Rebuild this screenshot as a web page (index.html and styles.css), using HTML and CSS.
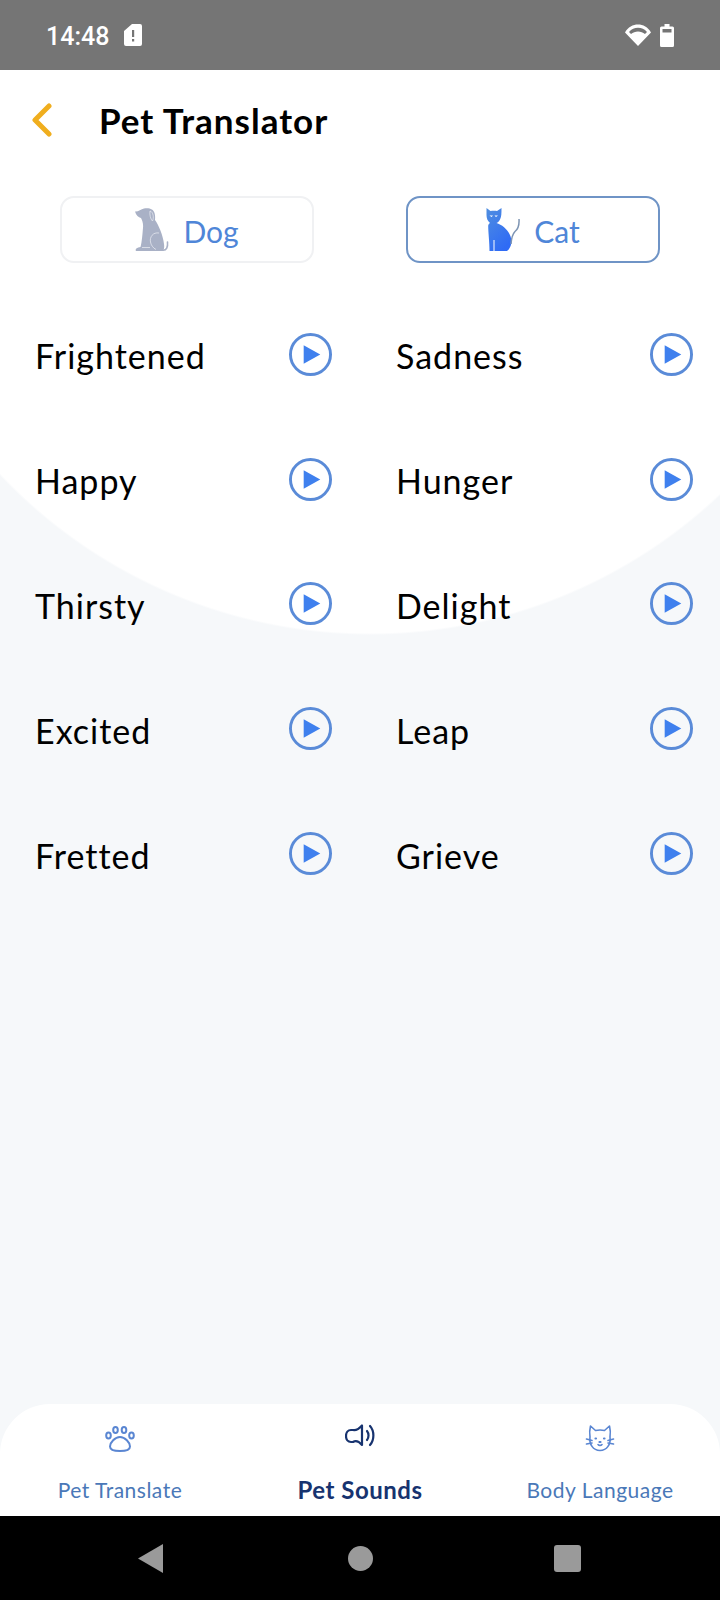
FILE: index.html
```html
<!DOCTYPE html>
<html lang="en">

<head>
  <meta charset="UTF-8">
  <title>Pet Translator</title>
  <link rel="stylesheet" href="styles.css">
</head>

<body>
  <div class="status">
    <div class="status-left">
      <span class="time">14:48</span>
      <svg class="sim" width="18" height="22" viewBox="0 0 18 22"><path fill="#fff" fill-rule="evenodd" d="M8 0h8a2 2 0 0 1 2 2v18a2 2 0 0 1-2 2H2a2 2 0 0 1-2-2V7zM8 6v7h2.2V6zM8 15v2.4h2.2V15z"/></svg>
    </div>
    <div class="status-right">
      <svg width="26" height="22" viewBox="0 0 26 22"><path fill="#fff" fill-rule="evenodd" d="M0 8.500C3 3 8 0.500 13 0.500S23 3 26 8.500L13 22zM4 8C6.500 5 9.500 3.800 13 3.800S19.500 5 22 8l-2 2C18 8.400 15.700 7.500 13 7.500S8 8.400 6 10z"/></svg>
      <svg width="14" height="23" viewBox="0 0 14 23"><path fill="#fff" fill-rule="evenodd" d="M4.500 0h5v2.500H12.500A1.500 1.500 0 0 1 14 4V21.500A1.500 1.500 0 0 1 12.500 23H1.500A1.500 1.500 0 0 1 0 21.500V4A1.500 1.500 0 0 1 1.500 2.500H4.500zM2.500 5v3.500h9V5z"/></svg>
    </div>
  </div>

  <div class="page">
    <header class="topbar">
      <svg class="back" width="22" height="34" viewBox="0 0 22 34"><path fill="none" stroke="#f0ae1e" stroke-width="5" stroke-linecap="round" stroke-linejoin="round" d="M18 3L4 17l14 14"/></svg>
      <h1>Pet Translator</h1>
    </header>

    <div class="tabs">
      <button class="pet-btn">
        <svg width="34" height="44" viewBox="0 0 34 44">
          <path fill="#a9b1c6" d="M0 3.500C3 4 6 1 9 0.500 14 -0.500 18.500 1 19.500 5 20.500 8 20 11 20 12 23.500 17 28 27 29 36 29.500 39 29 41.500 28 43H1C0 41.500 1 39.500 5.500 39 7 34 7.500 25 8 20 8.500 15 7 12 6 10 3.500 9.500 1 7 0 3.500z"/>
          <path fill="none" stroke="#a9b1c6" stroke-width="1.600" stroke-linecap="round" d="M28 42.300C31.500 42.500 33 39 32.500 34"/>
          <path fill="none" stroke="#e4e7ef" stroke-width=".8" d="M15 3C18.500 4 19 10 17.500 13 15.500 11 14.500 7 15 3zM24 25C18 24 14.500 29 15.500 34 16 37 18 40 21 41.500M15 39.500H7"/>
        </svg>
        <span>Dog</span>
      </button>
      <button class="pet-btn pet-on">
        <svg width="34" height="44" viewBox="0 0 34 44">
          <defs><linearGradient id="catfill" x1="0" y1="0" x2="0.600" y2="1"><stop offset="0" stop-color="#4f8ee0"/><stop offset="1" stop-color="#2f6bf5"/></linearGradient></defs>
          <path fill="url(#catfill)" fill-rule="evenodd" d="M0.500 0L4.500 3C6.500 2.500 9.500 2.500 11 3L15.500 0C15.500 5 15.500 9 14 11.500 13 13.500 12 14.500 10.500 15 17 17 25 24 25.500 33 25.500 37 24 41 21 43H8.500V32H7.500V43H3.500C3.500 34 2.200 24 2.200 18 2.200 16.500 3 15.500 4 15 1.500 13 0.500 10 0.500 7zM3.500 7.500L5.500 9 7 7.500zM8.500 7.500L10 9 12 7.500z"/>
          <path fill="none" stroke="#7d94b3" stroke-width="1.500" d="M25 36C25.500 30 26 26.500 29 23.500 31.500 21.500 33.500 18.500 33 11"/>
        </svg>
        <span>Cat</span>
      </button>
    </div>

    <div class="sounds">
      <div class="sound"><span>Frightened</span><svg class="play" viewBox="0 0 44 44"><circle cx="22" cy="22" r="20.500"/><path d="M15 12.500v19L32 22z"/></svg></div>
      <div class="sound"><span>Sadness</span><svg class="play" viewBox="0 0 44 44"><circle cx="22" cy="22" r="20.500"/><path d="M15 12.500v19L32 22z"/></svg></div>
      <div class="sound"><span>Happy</span><svg class="play" viewBox="0 0 44 44"><circle cx="22" cy="22" r="20.500"/><path d="M15 12.500v19L32 22z"/></svg></div>
      <div class="sound"><span>Hunger</span><svg class="play" viewBox="0 0 44 44"><circle cx="22" cy="22" r="20.500"/><path d="M15 12.500v19L32 22z"/></svg></div>
      <div class="sound"><span>Thirsty</span><svg class="play" viewBox="0 0 44 44"><circle cx="22" cy="22" r="20.500"/><path d="M15 12.500v19L32 22z"/></svg></div>
      <div class="sound"><span>Delight</span><svg class="play" viewBox="0 0 44 44"><circle cx="22" cy="22" r="20.500"/><path d="M15 12.500v19L32 22z"/></svg></div>
      <div class="sound"><span>Excited</span><svg class="play" viewBox="0 0 44 44"><circle cx="22" cy="22" r="20.500"/><path d="M15 12.500v19L32 22z"/></svg></div>
      <div class="sound"><span>Leap</span><svg class="play" viewBox="0 0 44 44"><circle cx="22" cy="22" r="20.500"/><path d="M15 12.500v19L32 22z"/></svg></div>
      <div class="sound"><span>Fretted</span><svg class="play" viewBox="0 0 44 44"><circle cx="22" cy="22" r="20.500"/><path d="M15 12.500v19L32 22z"/></svg></div>
      <div class="sound"><span>Grieve</span><svg class="play" viewBox="0 0 44 44"><circle cx="22" cy="22" r="20.500"/><path d="M15 12.500v19L32 22z"/></svg></div>
    </div>

    <nav class="tabbar">
      <div class="tab">
        <svg width="30" height="28" viewBox="0 -2 30 28" fill="none" stroke="#5a86d2" stroke-width="2">
          <ellipse cx="3.500" cy="9.500" rx="2.300" ry="3"/>
          <ellipse cx="10.500" cy="4" rx="2.300" ry="3.100"/>
          <ellipse cx="19" cy="4" rx="2.300" ry="3.100"/>
          <ellipse cx="26.500" cy="9.500" rx="2.300" ry="3"/>
          <path d="M15 11C10 11 5 16.500 5 20.500 5 23.500 9 25 15 25S25 23.500 25 20.500C25 16.500 20 11 15 11z"/>
        </svg>
        <span>Pet Translate</span>
      </div>
      <div class="tab tab-on">
        <svg width="30" height="28" viewBox="0 2 30 28" fill="none" stroke="#17336f" stroke-width="2.200" stroke-linecap="round" stroke-linejoin="round">
          <path d="M17 3.500V23C14 19.500 11 18 8 20H6C3 20 1 17.500 1 14S3 8 6 8H8C11 8.500 14 7 17 3.500z"/>
          <path d="M22 9C24 11.500 24 15.500 22 18M25 4C29.500 9 29.500 18 25 23"/>
        </svg>
        <span>Pet Sounds</span>
      </div>
      <div class="tab">
        <svg width="30" height="28" viewBox="0 0 30 28" fill="none" stroke="#5a86d2" stroke-width="1.600" stroke-linecap="round" stroke-linejoin="round">
          <path d="M5.500 2L10.500 6.500C13 6 17 6 19.500 6.500L24.500 2C25.500 6 25.500 10 25 13 26 20 22 26.500 15 26.500S4 20 5 13C4.500 10 4.500 6 5.500 2z"/>
          <path d="M1.500 15L7 16.500M1.500 20L7 19M28.500 15L23 16.500M28.500 20L23 19M13 20.500C14 21.700 16 21.700 17 20.500"/>
          <path d="M10.500 14.500h.500M19 14.500h.500M14.500 18h1" stroke-width="2.200"/>
        </svg>
        <span>Body Language</span>
      </div>
    </nav>
  </div>

  <div class="sysnav">
    <svg width="25" height="29" viewBox="0 0 25 29"><path fill="#9a9a9a" d="M25 0V29L0 14.500z"/></svg>
    <span class="sys-circle"></span>
    <span class="sys-square"></span>
  </div>
</body>

</html>
```

FILE: styles.css
```css
* {box-sizing: border-box;}

html, body {margin: 0;padding: 0;}

body {
  width: 720px;
  height: 1600px;
  display: flex;
  flex-direction: column;
  font-family: 'Lato', sans-serif;
  color: #000;
  overflow: hidden;
}

.status {
  height: 70px;
  background: #757575;
  display: flex;
  align-items: center;
  justify-content: space-between;
  padding: 0 46px 0 46px;
}

.status-left, .status-right {display: flex;align-items: center;}

.status-left {gap: 15px;}

.status-right {gap: 9px;}

.time {
  font-family: 'Roboto', sans-serif;
  font-weight: 500;
  font-size: 25px;
  color: #fff;
  padding-top: 2px;
}

.page {
  flex: 1;
  display: flex;
  flex-direction: column;
  background: radial-gradient(circle 510px at 370px 55px, #fff 99.6%, #f6f8fa 100%) #f6f8fa;
}

.topbar {
  height: 100px;
  display: flex;
  align-items: center;
  padding-left: 31px;
}

h1 {
  margin: 0 0 0 46px;
  font-size: 35px;
  font-weight: 700;
  letter-spacing: 1px;
}

.tabs {
  display: flex;
  justify-content: space-between;
  padding: 26px 60px 0 60px;
}

.pet-btn {
  width: 254px;
  height: 67px;
  display: flex;
  align-items: center;
  justify-content: center;
  gap: 14px;
  background: #fff;
  border: 2px solid #f0f1f3;
  border-radius: 14px;
  font-family: 'Lato', sans-serif;
  font-size: 30px;
  color: #4f86d8;
  padding: 0;
}

.pet-btn span {padding-top: 3px;}

.pet-on {border-color: #6f94c6;}

.sounds {
  display: grid;
  grid-template-columns: 297px 297px;
  grid-auto-rows: 124.8px;
  column-gap: 64px;
  padding: 29px 0 0 35px;
}

.sound {
  display: flex;
  align-items: center;
  justify-content: space-between;
  font-size: 34px;
  letter-spacing: 1px;
}

.sound span {padding-top: 3px;}

.play {width: 43px;height: 43px;}

.play circle {fill: none;stroke: #5a8bd8;stroke-width: 3px;}

.play path {fill: #3f80ee;}

.tabbar {
  margin-top: auto;
  height: 112px;
  background: #fff;
  border-radius: 50px 50px 0 0;
  display: grid;
  grid-template-columns: 1fr 1fr 1fr;
}

.tab {
  display: flex;
  flex-direction: column;
  align-items: center;
  padding-top: 20px;
  font-size: 21px;
  color: #4a78b8;
  letter-spacing: .5px;
}

.tab span {margin-top: 25px;line-height: 26px;}

.tab-on {color: #17336f;font-weight: 700;font-size: 24px;}

.sysnav {
  height: 84px;
  background: #000;
  display: flex;
  align-items: center;
  gap: 183px;
  padding-left: 138px;
}

.sysnav svg {margin-right: 2px;}

.sys-circle {width: 25px;height: 25px;border-radius: 50%;background: #9a9a9a;}

.sys-square {width: 27px;height: 27px;border-radius: 3px;background: #9a9a9a;margin-left: -2px;}
```
